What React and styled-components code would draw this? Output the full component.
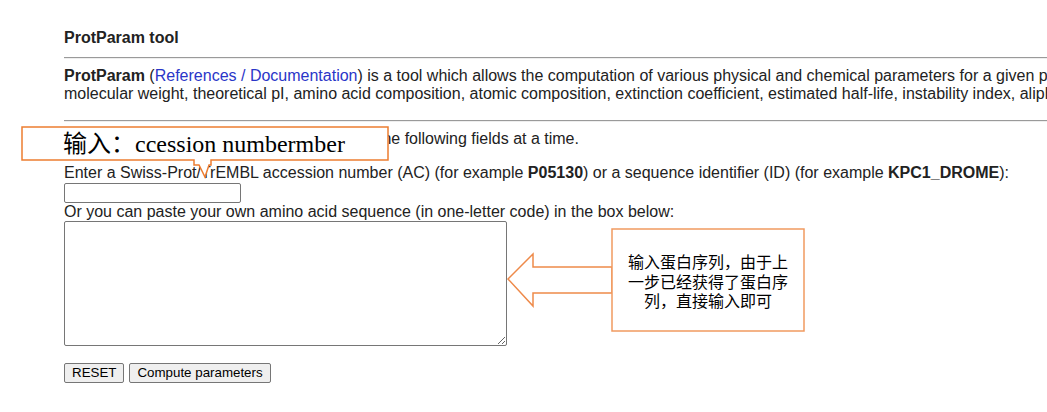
import React from "react";
import styled, { createGlobalStyle } from "styled-components";

const GlobalStyle = createGlobalStyle`
  html, body {
    margin: 0;
    background: #fff;
    overflow: hidden;
  }
  body {
    font-family: "Liberation Sans", Arial, "Noto Sans CJK SC", sans-serif;
    font-size: 16px;
    color: #222;
  }
`;

const Page = styled.div`
  position: relative;
  width: 1500px;
  height: 412px;
  padding: 29px 0 0 64px;
  box-sizing: border-box;
  line-height: 18px;
`;

const Title = styled.h1`
  margin: 0;
  font-size: 16px;
  line-height: 18px;
  font-weight: bold;
`;

const Rule = styled.hr`
  margin: ${(p) => p.$gap}px 0 0;
  height: 0;
  border: 0;
  border-top: 1px solid #9a9a9a;
  border-bottom: 1px solid #eeeeee;
`;

const Text = styled.p`
  margin: ${(p) => p.$gap || 0}px 0 0;
  white-space: nowrap;
`;

const Links = styled.span`
  color: #2a36c8;

  a {
    color: inherit;
    text-decoration: none;
  }
`;

const Field = styled.input`
  display: block;
  width: 177px;
  height: 20px;
  margin: 1px 0 0;
  box-sizing: border-box;
  border: 1px solid #767676;
  border-radius: 2px;
  background: #fff;
`;

const Sequence = styled.textarea`
  display: block;
  width: 443px;
  height: 125px;
  margin: 0;
  box-sizing: border-box;
  border: 1px solid #767676;
  border-radius: 2px;
  background: #fff;
`;

const Actions = styled.div`
  display: flex;
  gap: 5px;
  margin-top: 17px;
`;

const Button = styled.button`
  height: 20px;
  padding: 0 7px;
  font-family: "Liberation Sans", Arial, sans-serif;
  font-size: 13.33px;
  line-height: 18px;
  color: #000;
  background: #efefef;
  border: 1px solid #767676;
  border-radius: 2px;
`;

/* annotation callouts drawn over the page */
const Callout = styled.div`
  position: absolute;
  left: ${(p) => p.$x}px;
  top: ${(p) => p.$y}px;
  width: ${(p) => p.$w}px;
  height: ${(p) => p.$h}px;

  svg {
    display: block;
    overflow: visible;
  }
`;

const CalloutShape = styled.polygon`
  fill: #fff;
  stroke: ${(p) => p.$color};
  stroke-width: 1.5;
  stroke-linejoin: miter;
`;

const BigLabel = styled.div`
  position: absolute;
  left: 43px;
  top: 7px;
  font-family: "Liberation Serif", "Times New Roman", "Noto Sans CJK SC", serif;
  font-size: 24px;
  line-height: 24px;
  color: #000;
  white-space: nowrap;
`;

const NoteBox = styled.div`
  position: absolute;
  left: 107px;
  top: 4px;
  width: 192px;
  height: 102px;
  display: flex;
  align-items: center;
  justify-content: center;
  padding-top: 3px;
  box-sizing: border-box;
  font-family: "Noto Sans CJK SC", "Microsoft YaHei", sans-serif;
  font-size: 16px;
  line-height: 19.5px;
  color: #000;
  text-align: center;
  white-space: nowrap;
`;

const App = () => {
  return (
    <>
      <GlobalStyle />
      <Page>
        <Title>ProtParam tool</Title>
        <Rule $gap={10} />
        <Text $gap={8}>
          <b>ProtParam</b> (
          <Links>
            <a href="#">References</a> / <a href="#">Documentation</a>
          </Links>
          ) is a tool which allows the computation of various physical and
          chemical parameters for a given protein stored in Swiss-Prot or
          TrEMBL or for a user entered protein sequence.
          <br />
          molecular weight, theoretical pI, amino acid composition, atomic
          composition, extinction coefficient, estimated half-life, instability
          index, aliphatic index and grand average of hydropathicity (GRAVY)
          (Disclaimer).
        </Text>
        <Rule $gap={17} />
        <Text $gap={8}>
          Please note that you may only fill out one of the following fields at
          a time.
        </Text>
        <Text $gap={16}>
          Enter a Swiss-Prot/TrEMBL accession number (AC) (for example{" "}
          <b>P05130</b>) or a sequence identifier (ID) (for example{" "}
          <b>KPC1_DROME</b>):
        </Text>
        <Field type="text" />
        <Text>
          Or you can paste your own amino acid sequence (in one-letter code) in
          the box below:
        </Text>
        <Sequence />
        <Actions>
          <Button>RESET</Button>
          <Button>Compute parameters</Button>
        </Actions>

        <Callout $x={20} $y={125} $w={370} $h={55}>
          <svg width="370" height="55">
            <CalloutShape
              $color="#ed7d31"
              points="2,2 368,2 368,35 191,35 191,40 189,40 185,52 179,40 174,40 174,35 2,35"
            />
          </svg>
          <BigLabel>输入：ccession numbermber</BigLabel>
        </Callout>

        <Callout $x={505} $y={225} $w={302} $h={110}>
          <svg width="302" height="110">
            <CalloutShape
              $color="#ee8a4a"
              points="107,42 28,42 28,29 3,54 28,81 28,68 107,68"
            />
            <CalloutShape $color="#f19a60" points="107,4 299,4 299,106 107,106" />
          </svg>
          <NoteBox>
            输入蛋白序列，由于上
            <br />
            一步已经获得了蛋白序
            <br />
            列，直接输入即可
          </NoteBox>
        </Callout>
      </Page>
    </>
  );
};

export default App;
